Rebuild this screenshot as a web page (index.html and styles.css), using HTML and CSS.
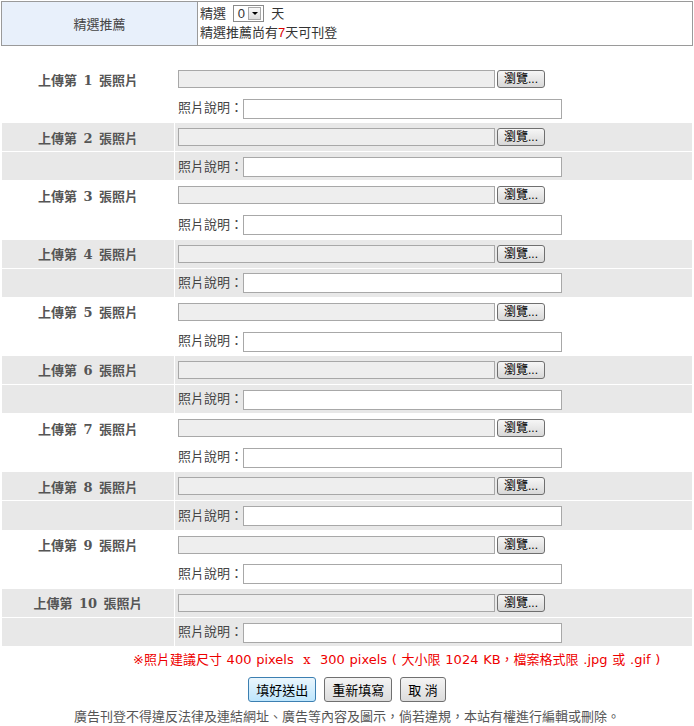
FILE: index.html
```html
<!DOCTYPE html>
<html lang="zh-Hant">
<head>
<meta charset="UTF-8" />
<title>上傳照片</title>
<link rel="stylesheet" href="styles.css">
</head>
<body>

<div class="page">
  <table class="feature">
    <tr>
      <th>精選推薦</th>
      <td>
        <div class="line">精選
          <span class="fake-select"><span class="val">0</span><span class="arrow"></span></span>
          天</div>
        <div class="line">精選推薦尚有<em>7</em>天可刊登</div>
      </td>
    </tr>
  </table>

  <table class="photos" id="photoTable"></table>

  <p class="note">※照片建議尺寸 400 pixels  <span class="x">x</span>  300 pixels ( 大小限 1024 KB，檔案格式限 .jpg 或 .gif )</p>

  <div class="actions">
    <button class="btn primary">填好送出</button>
    <button class="btn">重新填寫</button>
    <button class="btn">取 消</button>
  </div>

  <p class="footer">廣告刊登不得違反法律及連結網址、廣告等內容及圖示，倘若違規，本站有權進行編輯或刪除。</p>
</div>

<script>
  // 產生 10 組上傳欄位
  const photoTable = document.getElementById("photoTable");
  for (let i = 1; i <= 10; i++) {
    const shade = i % 2 === 0 ? " gray" : "";
    photoTable.insertAdjacentHTML("beforeend",
      '<tr class="row' + shade + '">' +
        '<th>上傳第 ' + i + ' 張照片</th>' +
        '<td><input class="file-path" type="text" readonly><button class="browse">瀏覽...</button></td>' +
      '</tr>' +
      '<tr class="row' + shade + '">' +
        '<th></th>' +
        '<td>照片說明：<input class="desc" type="text"></td>' +
      '</tr>');
  }
</script>

</body>
</html>
```

FILE: styles.css
```css
body {
  margin: 0;
  background: #fff;
  color: #333;
  font-family: "Liberation Sans", "Noto Sans CJK TC", sans-serif;
  font-size: 13px;
}
.page {
  width: 692px;
  padding: 1px 0 0 1px;
}

/* 精選推薦 */
.feature {
  width: 692px;
  height: 45px;
  border-collapse: collapse;
  border: 1px solid #9a9a9a;
}
.feature th {
  width: 195px;
  background: #e8f0fb;
  border-right: 1px solid #9a9a9a;
  font-weight: normal;
  color: #444;
  text-align: center;
  padding: 0;
}
.feature td {
  padding: 2px 0 0 2px;
  vertical-align: top;
}
.feature .line {
  height: 19px;
  line-height: 19px;
}
.feature em {
  font-style: normal;
  color: #d00;
}
.fake-select {
  display: inline-flex;
  align-items: center;
  vertical-align: top;
  margin: 1px 4px 0 3px;
  height: 15px;
  width: 29px;
  border: 1px solid #8a8a8a;
  background: #fff;
}
.fake-select .val {
  flex: 1;
  padding-left: 4px;
  line-height: 15px;
}
.fake-select .arrow {
  position: relative;
  width: 11px;
  height: 11px;
  margin-right: 2px;
  border: 1px solid #a8a8a8;
  background: linear-gradient(#fafafa, #dcdcdc);
}
.fake-select .arrow::after {
  content: "";
  position: absolute;
  left: 3px;
  top: 4px;
  border-left: 3px solid transparent;
  border-right: 3px solid transparent;
  border-top: 3px solid #000;
}

/* 上傳照片 */
.photos {
  width: 692px;
  margin-top: 18px;
  border-collapse: separate;
  border-spacing: 1px;
}
.photos th,
.photos td {
  height: 28.1px;
  padding: 0;
}
.photos th {
  width: 172px;
  text-align: center;
  color: #555;
  font-weight: bold;
  font-family: "DejaVu Serif", "Noto Sans CJK TC", serif;
  font-size: 13px;
  word-spacing: 2px;
}
.photos td {
  padding-left: 3px;
  color: #444;
}
.photos .gray th,
.photos .gray td {
  background: #e8e8e8;
}
.file-path {
  box-sizing: border-box;
  width: 317px;
  height: 18px;
  margin: 0;
  border: 1px solid #a8a8a8;
  background: #eeeeee;
  vertical-align: middle;
}
.browse {
  box-sizing: border-box;
  width: 48px;
  height: 18px;
  margin: 0 0 0 2px;
  padding: 0;
  border: 1px solid #6f6f6f;
  border-radius: 3px;
  background: linear-gradient(#f6f6f6, #d8d8d8);
  color: #000;
  font-family: "Liberation Sans", "Noto Sans CJK TC", sans-serif;
  font-size: 12px;
  line-height: 14px;
  vertical-align: middle;
}
.desc {
  box-sizing: border-box;
  width: 319px;
  height: 20px;
  margin: 0;
  border: 1px solid #a8a8a8;
  background: #fff;
  vertical-align: middle;
}

/* 說明與按鈕 */
.note {
  margin: 5px 0 0;
  padding-left: 132px;
  color: #e00;
  font-family: "DejaVu Sans", "Noto Sans CJK TC", sans-serif;
  line-height: 16px;
  white-space: pre;
  word-spacing: 0.6px;
}
.note .x {
  font-family: "DejaVu Serif", serif;
}
.actions {
  display: flex;
  justify-content: center;
  gap: 8px;
  margin-top: 9px;
}
.btn {
  height: 25px;
  padding: 0 7px;
  border: 1px solid #707070;
  border-radius: 3px;
  background: linear-gradient(#f4f4f4, #dcdcdc);
  color: #000;
  font-family: "Liberation Sans", "Noto Sans CJK TC", sans-serif;
  font-size: 13px;
}
.btn.primary {
  border-color: #3c7fb1;
  background: linear-gradient(#eaf6fd, #bee6fd);
}
.footer {
  margin: 6px 0 0;
  text-align: center;
  color: #555;
  line-height: 18px;
}
```
